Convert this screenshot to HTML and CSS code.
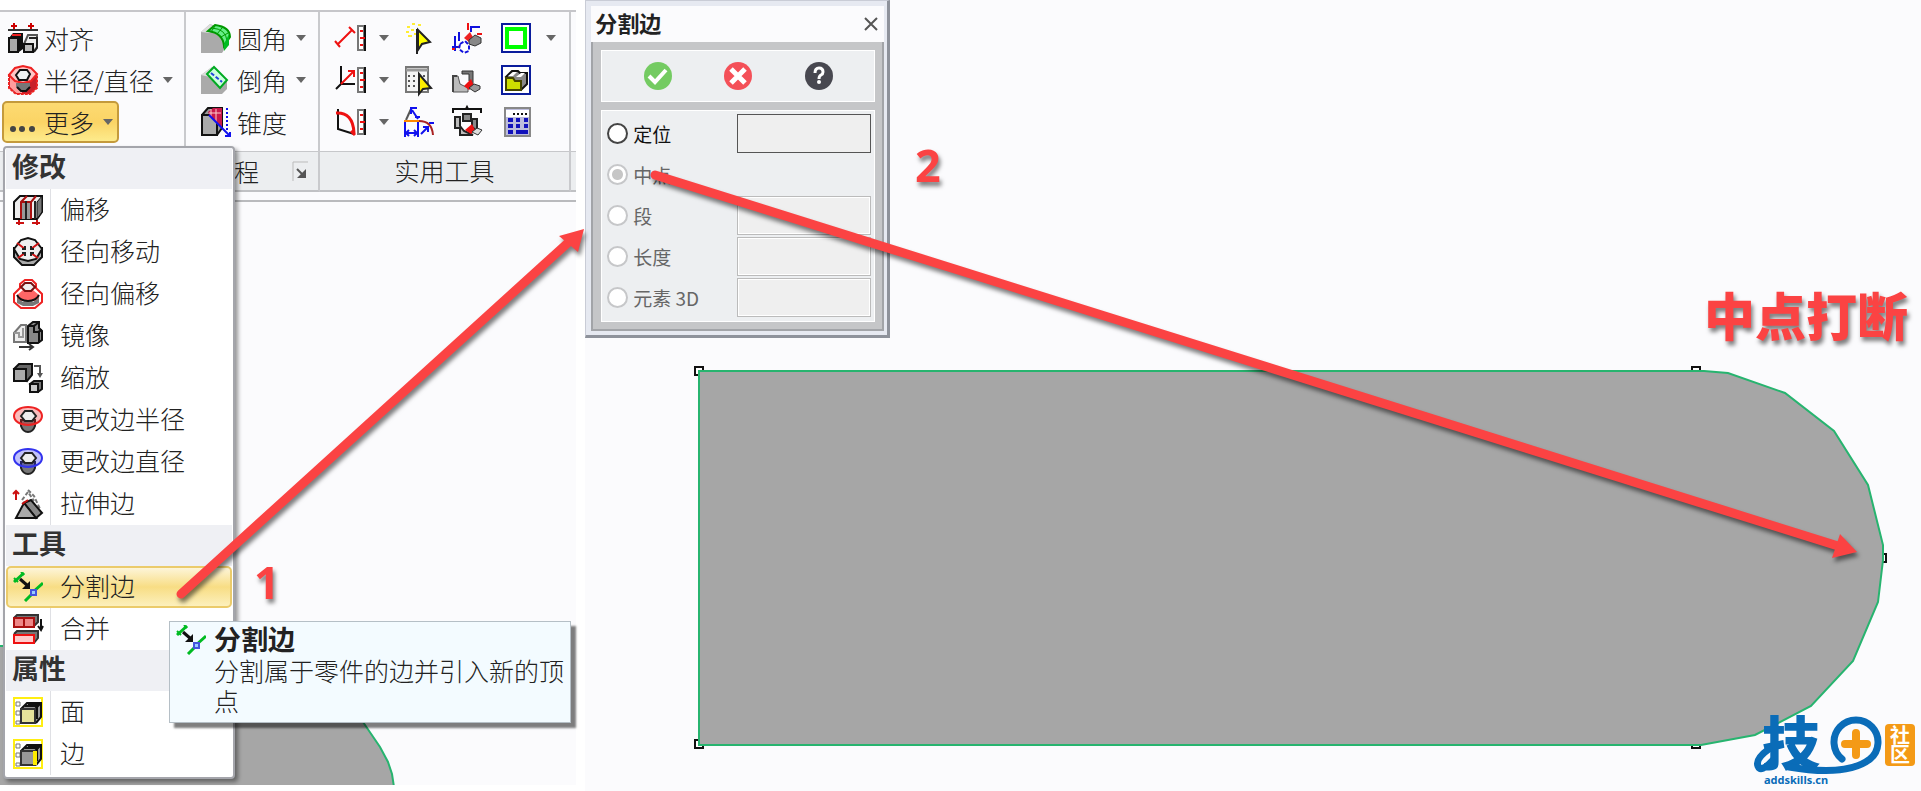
FILE: index.html
```
<!DOCTYPE html>
<html lang="zh-CN">
  <head>
    <meta charset="UTF-8" />
    <meta name="viewport" content="width=device-width, initial-scale=1.0" />
    <link rel="stylesheet" href="styles.css">
    <title>分割边</title>
  </head>
  <body>
    <!-- shared icons -->
    <svg class="sprite" aria-hidden="true">
      <symbol id="i-split" viewBox="0 0 30 30">
        <path d="M1 10 11 1M20 20 30 11M12 29 19 22" stroke="#0b2" stroke-width="3" fill="none" />
        <path d="M1 6l4 4M8 0l3 3" stroke="#0b2" stroke-width="2" />
        <path d="M7 7l8 7" stroke="#111" stroke-width="3" />
        <path d="M17 9v8H9z" fill="#111" />
        <path d="M18 18h5v5h-5z" fill="#9cf" stroke="#45d" stroke-width="2" />
      </symbol>
      <symbol id="i-ruler" viewBox="0 0 9 26">
        <path d="M1 1h6v24H1z" fill="#fff" stroke="#777" stroke-width="2" />
        <path d="M8 0v26" stroke="#111" stroke-width="2" />
        <path d="M3 6h3M3 13h5M3 20h3" stroke="#e11" stroke-width="2" />
      </symbol>
      <symbol id="i-flange" viewBox="0 0 30 30">
        <path d="M8 15v6q2 6 7 6t7-6v-6z" fill="#777" stroke="#222" stroke-width="2" />
        <path d="M1 11C1 6 7 2 15 2s14 4 14 9-6 9-14 9S1 16 1 11z" fill="currentColor" fill-opacity=".3" stroke="currentColor" stroke-width="2" />
        <path d="M8 11l4-5h7l4 5-4 5h-7z" fill="#eee" stroke="#222" stroke-width="2" />
      </symbol>
      <symbol id="i-cube" viewBox="0 0 30 30">
        <path d="M8 12l6-6h14v14l-6 6z" fill="#999" />
        <path d="M8 12l6-6h14v14l-5 6M22 12l6-6" fill="none" stroke="#111" stroke-width="2" />
        <path d="M12 9h12v13M15 7h11" fill="none" stroke="#111" stroke-width="2" />
        <path d="M8 12h14v14H8z" fill="currentColor" stroke="#333" stroke-width="2" />
      </symbol>
    </svg>

    <main class="workspace">
      <section class="modeling">
        <svg class="part-left" aria-hidden="true">
          <path d="M-2 646H300L363 722 380 747 388 762 392 774 394 787H-2z" />
        </svg>

        <div class="ribbon">
          <div class="group edit">
            <div class="commands">
              <button class="command">
                <svg class="icon" viewBox="0 0 30 30">
                  <path d="M6 0v6M3 3h6M23 0v6M20 3h6" stroke="#c00" stroke-width="2" />
                  <path d="M0 7h30" stroke="#333" stroke-width="2" />
                  <path d="M5 10h10v16l-4 3V15H1z" fill="#111" />
                  <path d="M4 12h9" stroke="#e22" stroke-width="2" />
                  <path d="M1 15h9v14H1z" fill="#aaa" stroke="#111" stroke-width="2" />
                  <path d="M16 21l4-9h9v12l-4 5" fill="#eee" stroke="#555" stroke-width="2" />
                  <path d="M21 15h8v10l-3 4" fill="none" stroke="#222" stroke-width="2" />
                  <path d="M16 21h9v8h-9z" fill="#bbb" stroke="#111" stroke-width="2" />
                </svg>
                对齐
              </button>
              <button class="command">
                <svg class="icon" viewBox="0 0 30 30">
                  <path d="M1 9v14l7 6h14l7-6V9z" fill="#c8202a" />
                  <path d="M2 10v12l6 6h6V14z" fill="#ff9d9d" />
                  <path d="M1 9v14l7 6h14l7-6V9" fill="none" stroke="#e22" stroke-width="2" stroke-dasharray="3 1" />
                  <path d="M1 10l6-7 8-2 8 2 6 6-6 7-8 2-8-2z" fill="#ffc5c5" stroke="#e22" stroke-width="2" />
                  <path d="M8 10l4-5h7l3 4-3 6h-8z" fill="#f2f2f2" stroke="#111" stroke-width="2" />
                  <path d="M8 18h14v4l-4 4h-6l-4-4z" fill="#777" />
                  <path d="M9 22l4 4h5l4-4" fill="none" stroke="#111" stroke-width="2" />
                </svg>
                半径/直径
                <i class="caret"></i>
              </button>
              <button class="command more">
                <svg class="icon" viewBox="0 0 30 30">
                  <g fill="#444"><circle cx="5" cy="22" r="3" /><circle cx="14" cy="22" r="3" /><circle cx="24" cy="22" r="3" /></g>
                </svg>
                更多
                <i class="caret"></i>
              </button>
            </div>
            <div class="caption"></div>
          </div>

          <div class="group engineering">
            <div class="commands">
              <button class="command">
                <svg class="icon" viewBox="0 0 30 30">
                  <path d="M0 9l9-8 12 5 4 18-4 6H0z" fill="#aaa" />
                  <path d="M0 9l9-8 5 4-5 5z" fill="#ddd" />
                  <path d="M7 8l7-6q15 2 15 12l-6 9Q22 10 7 8z" fill="#6e8" stroke="#090" stroke-width="2" />
                  <path d="M11 5q14 1 15 13M14 3l-4 6M21 5l-5 6M27 10l-7 4" fill="none" stroke="#090" />
                  <path d="M28 11v11l-5 6v-7z" fill="#0b2" />
                </svg>
                圆角
                <i class="caret"></i>
              </button>
              <button class="command">
                <svg class="icon" viewBox="0 0 30 30">
                  <path d="M0 10l11-8 15 14v8l-5 5H0z" fill="#aaa" />
                  <path d="M0 10l11-8 5 3-7 7z" fill="#ddd" />
                  <path d="M6 9l7-7 13 13-7 8z" fill="#cfd" stroke="#0a2" stroke-width="2" />
                  <path d="M10 8l11 9" stroke="#24d" stroke-width="2" stroke-dasharray="4 2" />
                </svg>
                倒角
                <i class="caret"></i>
              </button>
              <button class="command">
                <svg class="icon" viewBox="0 0 30 30">
                  <path d="M1 8l6-7h14v20l-5 7" fill="#999" stroke="#111" stroke-width="2" />
                  <path d="M1 8h15v20H1z" fill="#aaa" stroke="#111" stroke-width="2" />
                  <path d="M7 5l5-4h9v20L9 9z" fill="#c9184a" />
                  <path d="M10 2v9M15 2v13M8 6h12" stroke="#fcc" />
                  <path d="M8 8l21 21M29 25v4h-5" stroke="#11e" stroke-width="2" fill="none" />
                  <path d="M26 1v22" stroke="#11e" stroke-width="2" stroke-dasharray="2 2" />
                </svg>
                锥度
              </button>
            </div>
            <div class="caption">
              程
              <button class="launcher" aria-label="更多选项">
                <svg viewBox="0 0 16 20"><path d="M1 20V1h15" fill="none" stroke="#bbb" /><path d="M5 8l8 8" stroke="#555" stroke-width="2" /><path d="M14 8v9H5z" fill="#555" /></svg>
              </button>
            </div>
          </div>

          <div class="group utilities">
            <div class="commands tools">
              <button aria-label="测量距离">
                <svg class="icon" viewBox="0 0 30 30"><path d="M3 21L17 7M0 18l5 6M14 4l6 6" stroke="#e11" stroke-width="2" /><use href="#i-ruler" x="22" y="2" width="9" height="26" /></svg>
              </button>
              <i class="caret"></i>
              <button aria-label="选择">
                <svg class="icon" viewBox="0 0 30 30"><path d="M14 6v25" stroke="#222" stroke-width="2" /><path d="M15 7l12 12-8 2-4 6z" fill="#ff0" stroke="#222" stroke-width="2" /><path d="M4 4h3M9 1h3M15 2h3M3 9h3M8 7h3M5 13h4M11 11h2" stroke="#fe3" stroke-width="2" /></svg>
              </button>
              <button aria-label="装配">
                <svg class="icon" viewBox="0 0 30 30"><path d="M3 13v15M0 24h9M7 9v9M19 9V4h9" stroke="#11d" stroke-width="2" fill="none" /><path d="M16 0v7M25 11h5M0 26h3M6 24h3" stroke="#e11" stroke-width="2" /><path d="M18 9l-6 6 5 4 5-3z" fill="#e22" /><path d="M17 17l6-5 6 3v5l-6 3-6-2z" fill="#888" stroke="#333" /><path d="M8 21l5-3 4 4v6l-5 2-5-4z" fill="#fff" stroke="#11d" stroke-width="2" stroke-dasharray="4 2" /></svg>
              </button>
              <button aria-label="边框">
                <svg class="icon" viewBox="0 0 30 30"><path d="M1 1h28v28H1z" fill="#fff" stroke="#0a1c9c" stroke-width="2" /><path d="M6 6h18v18H6z" fill="none" stroke="#0f0" stroke-width="4" /></svg>
              </button>
              <i class="caret"></i>

              <button aria-label="测量角度">
                <svg class="icon" viewBox="0 0 30 30"><path d="M6 1v18h14M6 19l-5 5" stroke="#111" stroke-width="2" fill="none" /><path d="M6 19L19 6M13 6h6v6" stroke="#e11" stroke-width="2" fill="none" /><use href="#i-ruler" x="22" y="2" width="9" height="26" /></svg>
              </button>
              <i class="caret"></i>
              <button aria-label="从列表选择">
                <svg class="icon" viewBox="0 0 30 30"><path d="M3 2h22v25H3z" fill="#f4f4f4" stroke="#777" stroke-width="2" /><path d="M3 5h22" stroke="#999" stroke-width="3" /><path d="M5 11h18M5 16h18M5 21h12" stroke="#555" stroke-width="2" stroke-dasharray="2 3" /><path d="M16 9l12 14-8 1-4 5z" fill="#fe0" stroke="#222" stroke-width="2" /></svg>
              </button>
              <button aria-label="替换">
                <svg class="icon" viewBox="0 0 30 30"><path d="M1 11h5l2 8 8 4v4H1z" fill="#bbb" stroke="#555" /><path d="M10 6h11v13l-4-3v-7h-7z" fill="#777" stroke="#333" /><path d="M1 27V11h4" fill="none" stroke="#444" stroke-width="2" /><path d="M19 14l-7 7 5 4 5-4z" fill="#e11" /><path d="M17 23l5-4 6 2v3l-5 3z" fill="#999" stroke="#333" /></svg>
              </button>
              <button aria-label="文件夹">
                <svg class="icon" viewBox="0 0 30 30"><path d="M1 1h28v28H1z" fill="#fff" stroke="#0a1c9c" stroke-width="2" /><path d="M5 12l6-6h6l2 2h7v11l-6 6z" fill="#888" stroke="#111" stroke-width="2" /><path d="M7 11l5-4h4l-4 4zM15 12l5-4h4l-4 4z" fill="#fff" /><path d="M5 13h7l2 3h6v9H5z" fill="#cd0" stroke="#440" stroke-width="2" /></svg>
              </button>
              <i></i>

              <button aria-label="测量曲线">
                <svg class="icon" viewBox="0 0 30 30"><path d="M3 2v20l16 5" stroke="#111" stroke-width="2" fill="none" /><path d="M1 6q17-1 18 20M16 24l4 4" stroke="#e11" stroke-width="3" fill="none" /><use href="#i-ruler" x="22" y="2" width="9" height="26" /></svg>
              </button>
              <i class="caret"></i>
              <button aria-label="标注">
                <svg class="icon" viewBox="0 0 30 30"><path d="M3 13L8 2" stroke="#555" stroke-width="2" /><path d="M9 3l6 9M8 7V1h6M12 10h5M2 14v16M15 14v16M3 26h11M6 23l-3 3 3 3M11 23l3 3-3 3M18 27l7-7M20 20h5v5M26 16h5" stroke="#11e" stroke-width="2" fill="none" /><path d="M1 14h15" stroke="#f80" stroke-width="2" /><path d="M16 14q13 0 14 14" stroke="#a22" stroke-width="2" fill="none" /></svg>
              </button>
              <button aria-label="重新连接">
                <svg class="icon" viewBox="0 0 30 30"><path d="M1 6V2h13l1-2 1 2h13v4" fill="none" stroke="#111" stroke-width="2" /><path d="M3 10h5v9l4 5 9 4H8v-7H3z" fill="#bbb" stroke="#222" stroke-width="2" /><path d="M11 7h8v5h6v12l-5-4v-6h-9z" fill="#888" stroke="#222" stroke-width="2" /><path d="M20 17l-7 6 6 4 4-4z" fill="#e11" /><path d="M20 25l5-4 5 2-4 5z" fill="#ddd" stroke="#333" /></svg>
              </button>
              <button aria-label="计算器">
                <svg class="icon" viewBox="0 0 30 30"><path d="M4 1h25v28H4z" fill="#bcbcdc" stroke="#888" stroke-width="2" /><path d="M5 3h23v7H5z" fill="#fff" /><path d="M12 7h14" stroke="#111" stroke-width="2" stroke-dasharray="2 2" /><path d="M7 13h5M15 13h4M23 13h4M7 19h5M15 19h4M23 19h4M7 25h5M15 25h12" stroke="#11b" stroke-width="4" /></svg>
              </button>
              <i></i>
            </div>
            <div class="caption">实用工具</div>
          </div>
          <div class="group rest"><div class="commands"></div><div class="caption"></div></div>
        </div>

        <div class="menu" role="menu">
          <h2>修改</h2>
          <button role="menuitem">
            <svg class="icon" viewBox="0 0 30 30"><path d="M1 7l6-6h22v16l-5 7H1z" fill="#eee" stroke="#111" stroke-width="2" /><path d="M24 7l5-6v16l-5 7z" fill="#777" stroke="#111" /><path d="M8 8h11v16H8z" fill="#999" /><path d="M8 24V7l6-6M18 24V7l5-6M8 7h11" fill="none" stroke="#a11" stroke-width="2" /><path d="M13 6v18M22 6v18" stroke="#222" stroke-width="2" /><path d="M3 28h8M6 25v5M19 28h8M24 25v5" stroke="#c11" stroke-width="2" /></svg>
            <span>偏移</span>
          </button>
          <button role="menuitem">
            <svg class="icon" viewBox="0 0 30 30"><path d="M1 11v9l8 8h12l8-8v-9z" fill="#aaa" stroke="#111" stroke-width="2" /><path d="M1 12L8 3l7-2 7 2 7 9-6 10-8 2-8-2z" fill="#eee" stroke="#111" stroke-width="2" /><path d="M4 6l8 6M26 6l-8 6M5 21l7-5M25 21l-7-5" stroke="#c11" stroke-width="2" /><path d="M9 12h3V9M21 12h-3V9M9 16h3v3M21 16h-3v3" fill="none" stroke="#222" stroke-width="2" /></svg>
            <span>径向移动</span>
          </button>
          <button role="menuitem">
            <svg class="icon" viewBox="0 0 30 30"><path d="M1 15l6-6V5l5-4h7l4 4v4l6 6v8l-7 6H8l-7-6z" fill="#fff" stroke="#e22" stroke-width="2" /><path d="M4 16l6-5h10l6 5v6H4z" fill="#f66" /><path d="M4 19l6 4h10l6-4v5l-6 3H10l-6-3z" fill="#777" /><path d="M4 16q3 6 11 6t11-6" fill="none" stroke="#111" stroke-width="2" /><path d="M8 8l4-4h6l4 4-4 4h-6z" fill="#eee" stroke="#711" stroke-width="2" /></svg>
            <span>径向偏移</span>
          </button>
          <button role="menuitem">
            <svg class="icon" viewBox="0 0 30 30"><path d="M1 12l7-8h5v17H1z" fill="#eee" stroke="#777" stroke-width="2" /><path d="M1 12h5v4h4V7" fill="none" stroke="#999" stroke-width="2" /><path d="M15 5l5-4h6v6l3 3v9l-4 3H15z" fill="#888" stroke="#111" stroke-width="2" /><path d="M15 5h6v6h5v11M21 5l5-4M25 11l4-2" fill="none" stroke="#111" stroke-width="2" /><path d="M6 26h14M16 23l4 3-4 3" stroke="#333" stroke-width="2" fill="none" /></svg>
            <span>镜像</span>
          </button>
          <button role="menuitem">
            <svg class="icon" viewBox="0 0 30 30"><path d="M1 6l5-5h13v11l-5 6z" fill="#666" stroke="#111" stroke-width="2" /><path d="M1 6h12v12H1z" fill="#aaa" stroke="#111" stroke-width="2" /><path d="M17 21l4-3h8v8l-4 3z" fill="#777" stroke="#111" stroke-width="2" /><path d="M17 21h8v8h-8z" fill="#ccc" stroke="#111" stroke-width="2" /><path d="M21 3h6v8" fill="none" stroke="#555" stroke-width="2" /><path d="M24 10h6l-3 5z" fill="#555" /></svg>
            <span>缩放</span>
          </button>
          <button role="menuitem">
            <svg class="icon red" viewBox="0 0 30 30"><use href="#i-flange" /></svg>
            <span>更改边半径</span>
          </button>
          <button role="menuitem">
            <svg class="icon blue" viewBox="0 0 30 30"><use href="#i-flange" /></svg>
            <span>更改边直径</span>
          </button>
          <button role="menuitem">
            <svg class="icon" viewBox="0 0 30 30"><path d="M9 11l6-8 6 9M15 1l6 6 6 13" fill="none" stroke="#777" stroke-width="2" stroke-dasharray="4 2" /><path d="M11 14l7-3 11 13-6 5z" fill="#888" stroke="#111" stroke-width="2" /><path d="M3 29l8-15 12 15z" fill="#aaa" stroke="#111" stroke-width="2" /><path d="M3 11V3M0 5l3-3 3 3" stroke="#c11" stroke-width="2" fill="none" /><path d="M9 15l6-4" stroke="#c11" stroke-width="2" /></svg>
            <span>拉伸边</span>
          </button>
          <h2>工具</h2>
          <button role="menuitem" class="selected">
            <svg class="icon"><use href="#i-split" /></svg>
            <span>分割边</span>
          </button>
          <button role="menuitem">
            <svg class="icon" viewBox="0 0 30 30"><path d="M1 4l3-3h21v7l-4 4" fill="#777" stroke="#333" stroke-width="2" /><path d="M1 4h20v9H1z" fill="#e88" stroke="#a11" stroke-width="2" /><path d="M11 4v9" stroke="#a11" stroke-width="2" /><path d="M1 20l3-3h21v7l-4 5" fill="#777" stroke="#333" stroke-width="2" /><path d="M1 21h20v8H1z" fill="#fcc" stroke="#e11" stroke-width="2" /><path d="M28 5v10M25 12l3 4 2-4" fill="none" stroke="#111" stroke-width="2" /></svg>
            <span>合并</span>
          </button>
          <h2>属性</h2>
          <button role="menuitem">
            <svg class="icon face" viewBox="0 0 30 30"><path d="M1 1h28v28H1z" fill="#fff" stroke="#fe1" stroke-width="2" /><path d="M3 5h4v4H3zM3 14h4v4H3zM3 24h4v3H3z" fill="#fff" stroke="#777" /><use href="#i-cube" /></svg>
            <span>面</span>
          </button>
          <button role="menuitem">
            <svg class="icon edge" viewBox="0 0 30 30"><path d="M1 1h28v28H1z" fill="#fff" stroke="#fe1" stroke-width="2" /><path d="M3 5h4v4H3zM3 14h4v4H3zM3 24h4v3H3z" fill="#fff" stroke="#777" /><use href="#i-cube" /><path d="M22 12v14" stroke="#fe0" stroke-width="4" /></svg>
            <span>边</span>
          </button>
        </div>

        <div class="tooltip" role="tooltip">
          <svg class="icon"><use href="#i-split" /></svg>
          <div>
            <strong>分割边</strong>
            <p>分割属于零件的边并引入新的顶点</p>
          </div>
        </div>
      </section>

      <section class="viewport">
        <form class="dialog">
          <header>
            <h1>分割边</h1>
            <button type="button" aria-label="关闭">
              <svg viewBox="0 0 14 14"><path d="M1 1l12 12M13 1L1 13" stroke="#555" stroke-width="2" /></svg>
            </button>
          </header>
          <div class="frame">
            <div class="actions">
              <button type="button" aria-label="确定">
                <svg viewBox="0 0 30 30"><circle cx="15" cy="15" r="14" fill="#74cb62" /><path d="M6 15l6 6L23 9" stroke="#fff" stroke-width="4" fill="none" /></svg>
              </button>
              <button type="button" aria-label="取消">
                <svg viewBox="0 0 30 30"><circle cx="15" cy="15" r="14" fill="#f45058" /><path d="M8 8l14 14M22 8L8 22" stroke="#fff" stroke-width="5" /></svg>
              </button>
              <button type="button" aria-label="帮助">
                <svg viewBox="0 0 30 30"><circle cx="15" cy="15" r="14" fill="#484850" /><path d="M11 12q0-5 4-5t4 4q0 2-2 3-2 1-2 4" stroke="#fff" stroke-width="3" fill="none" /><circle cx="15" cy="21" r="2" fill="#fff" /></svg>
              </button>
            </div>
            <div class="options">
              <div class="row">
                <input type="radio" name="mode" id="position" />
                <label for="position">定位</label>
                <input type="text" aria-label="定位值" />
              </div>
              <div class="row">
                <input type="radio" name="mode" id="middle" checked disabled />
                <label for="middle">中点</label>
              </div>
              <div class="row">
                <input type="radio" name="mode" id="segment" disabled />
                <label for="segment">段</label>
                <input type="text" aria-label="段值" disabled />
              </div>
              <div class="row">
                <input type="radio" name="mode" id="length" disabled />
                <label for="length">长度</label>
                <input type="text" aria-label="长度值" disabled />
              </div>
              <div class="row">
                <input type="radio" name="mode" id="element" disabled />
                <label for="element">元素 3D</label>
                <input type="text" aria-label="元素 3D 值" disabled />
              </div>
            </div>
          </div>
        </form>
      </section>

      <!-- part, vertices and callouts on the free canvas -->
      <svg class="canvas">
        <g class="vertex">
          <path d="M695 367h8v8h-8zM1692 367h8v8h-8zM1878 554h8v8h-8zM1692 740h8v8h-8zM695 740h8v8h-8z" />
        </g>
        <path class="part" d="M699 371H1704L1728 373 1785 393 1834 431 1868 485 1883 545V560L1878 602 1853 661 1811 706 1755 735 1701 745H699z" />
        <g class="callout">
          <path class="shaft" d="M181 594L571 240M655 175L1838 546" />
          <path class="head" d="M584 229L578 252 559 236zM1857 552L1832 558 1840 534z" />
          <text x="254" y="599">1</text>
          <text x="915" y="182">2</text>
          <text class="note" x="1704" y="336">中点打断</text>
        </g>
      </svg>

      <svg class="logo" viewBox="0 0 166 76" role="img" aria-label="技田社区">
        <text class="logo-char" x="11" y="50">技</text>
        <path d="M18 34Q4 44 7 51T21 46M91 44A22 22 0 1 1 119 44Q96 62 38 52" fill="none" stroke="#0a6cb8" stroke-width="7" stroke-linecap="round" />
        <path d="M105 18v22M94 29h22" stroke="#f49a16" stroke-width="8" stroke-linecap="round" />
        <rect x="134" y="9" width="30" height="42" rx="4" fill="#f49a16" />
        <text class="logo-badge" x="139" y="28">社</text>
        <text class="logo-badge" x="139" y="47">区</text>
        <text class="logo-site" x="13" y="69">addskills.cn</text>
      </svg>
    </main>
  </body>
</html>
```
FILE: styles.css
```
* {
  box-sizing: border-box;
}

body {
  margin: 0;
  font-family: "Noto Sans CJK SC", sans-serif;
  font-size: 25px;
  font-weight: 300;
  color: #222;
  background-color: #fff;
}

button {
  border: none;
  padding: 0;
  background: none;
  font: inherit;
  color: inherit;
}

.sprite {
  position: absolute;
  width: 0;
  height: 0;
}

.icon {
  display: block;
  flex: none;
  width: 30px;
  height: 30px;
  overflow: visible;
}

.workspace {
  position: relative;
  display: flex;
  gap: 9px;
  min-height: 100vh;
  overflow: hidden;
}

.modeling {
  position: relative;
  flex: 0 0 30%;
  margin-bottom: 6px;
  padding-top: 10px;
  background-color: #fbfbfd;
  box-shadow: inset 0 10px #fff;
}

.viewport {
  flex: 1;
  background-color: #fbfbfd;
}

.part-left {
  position: absolute;
  top: 0;
  left: 0;
  width: 100%;
  height: 100%;
}

.part-left path,
.part {
  fill: #a6a6a6;
  stroke: #27b46f;
  stroke-width: 2;
}

/* ribbon */
.ribbon {
  position: relative;
  display: flex;
  padding-bottom: 8px;
  border-top: 2px solid #c6c6ca;
  border-bottom: 2px solid #b9babd;
}

.group {
  display: flex;
  flex-direction: column;
  border-right: 2px solid #c9cacd;
  border-bottom: 2px solid #c0c1c4;
}

.edit {
  width: 186px;
}

.engineering {
  width: 134px;
}

.utilities {
  width: 251px;
}

.rest {
  flex: 1;
  border-right: none;
}

.commands {
  height: 140px;
  padding: 5px 0 0 15px;
  border-bottom: 1px solid #c6c7ca;
}

.edit .commands {
  padding-left: 2px;
}

.rest .commands {
  padding: 0;
}

.command {
  display: flex;
  align-items: center;
  gap: 6px;
  height: 42px;
  padding: 0 6px;
  line-height: 38px;
  white-space: nowrap;
}

.engineering .command {
  padding: 0;
}

.caret {
  width: 10px;
  height: 6px;
  margin-left: 3px;
  background-color: #666;
  clip-path: polygon(0 0, 100% 0, 50% 100%);
}

.more {
  border: 2px solid #c49a3c;
  border-radius: 5px;
  padding: 0 4px;
  background: linear-gradient(#fdda72, #fbd465 50%, #fdeb8c);
}

.tools {
  display: grid;
  grid-template-columns: 44px 24px 49px 49px 45px 20px;
  grid-auto-rows: 42px;
  align-items: center;
}

.tools .caret {
  margin-left: 0;
}

.caption {
  height: 38px;
  line-height: 36px;
  text-align: center;
  background-color: #eceef0;
}

.engineering .caption {
  display: flex;
  align-items: center;
  justify-content: space-between;
  padding: 0 10px 0 48px;
}

.launcher svg {
  display: block;
  width: 16px;
  height: 20px;
}

/* drop-down menu */
.menu {
  position: absolute;
  top: 146px;
  left: 3px;
  width: 232px;
  padding: 0 1px 2px;
  border: 2px solid #a4a5ab;
  border-radius: 4px;
  background-color: #fff;
  box-shadow: 3px 3px 4px rgba(0, 0, 0, 0.4);
}

.menu h2 {
  height: 41px;
  margin: 0;
  padding-left: 6px;
  font-size: 27px;
  font-weight: 700;
  line-height: 36px;
  color: #333;
  background-color: #eff0f4;
}

.menu button {
  display: flex;
  align-items: center;
  gap: 7px;
  width: 100%;
  height: 42px;
  padding-left: 7px;
}

.menu span {
  height: 42px;
  padding-left: 9px;
  border-left: 1px solid #dfe0e4;
  line-height: 38px;
}

.menu .selected {
  border: 2px solid #ebcb6b;
  border-radius: 5px;
  padding-left: 5px;
  background: linear-gradient(#fdf5d8, #f8dd84 50%, #fcf0bd);
}

.selected span {
  border-color: transparent;
}

.red {
  color: #e22;
}

.blue {
  color: #33e;
}

.face {
  color: #e5e29b;
}

.edge {
  color: #999;
}

.tooltip {
  position: absolute;
  top: 621px;
  left: 169px;
  display: flex;
  gap: 8px;
  width: 402px;
  padding: 0 4px 7px 6px;
  border: 1px solid #b5bfc6;
  background-color: #f3fbff;
  box-shadow: 5px 5px 2px rgba(0, 0, 0, 0.5);
  line-height: 30px;
}

.tooltip .icon {
  margin-top: 3px;
}

.tooltip strong {
  display: block;
  font-size: 27px;
  font-weight: 700;
  line-height: 33px;
}

.tooltip p {
  margin: 0;
}

/* dialog */
.dialog {
  width: 305px;
  padding: 5px 3px 4px 5px;
  border: 1px solid #c9ccd6;
  border-right: 3px solid #8e929b;
  border-bottom: 3px solid #8e929b;
  background-color: #e6e9f1;
}

.dialog header {
  display: flex;
  align-items: center;
  justify-content: space-between;
  height: 36px;
  padding: 0 6px 0 4px;
  background-color: #fbfbfd;
}

.dialog h1 {
  margin: 0;
  font-size: 22px;
  font-weight: 700;
  line-height: 32px;
  height: 36px;
}

.dialog svg {
  display: block;
  width: 30px;
  height: 30px;
}

.dialog header svg {
  width: 14px;
  height: 14px;
}

.frame {
  display: flex;
  flex-direction: column;
  gap: 8px;
  padding: 8px 7px 7px 8px;
  border: 2px solid #a2a4a8;
  border-top: none;
  background-color: #c5c6c8;
}

.actions,
.options {
  border: 1px solid #fff;
  background-color: #edeff1;
}

.actions {
  display: flex;
  align-items: center;
  justify-content: space-evenly;
  height: 52px;
}

.actions button {
  padding: 0 10px;
}

.options {
  padding: 2px 3px 3px 5px;
  font-size: 19px;
  font-weight: 400;
}

.row {
  display: flex;
  align-items: center;
  height: 41px;
}

.row label {
  flex: 1;
  padding-left: 5px;
  line-height: 38px;
  color: #111;
}

.row input {
  appearance: none;
  margin: 0;
}

.row input[type="radio"] {
  width: 21px;
  height: 21px;
  border: 2px solid #444;
  border-radius: 50%;
  background-color: #fff;
}

.row input[type="radio"]:disabled {
  border-color: #c6c7c9;
}

.row input[type="radio"]:checked {
  border-color: #c6c7c9;
  background: radial-gradient(circle, #c6c6c6 5px, #fff 6px);
}

.row input[type="text"] {
  width: 134px;
  height: 39px;
  border: 1px solid #555;
  background-color: #efefef;
}

.row input[type="text"]:disabled {
  border-color: #bbb;
  box-shadow: inset 0 0 0 1px #fff;
}

.row input:disabled + label {
  color: #666;
}

/* canvas and callouts */
.canvas {
  position: absolute;
  top: 0;
  left: 0;
  width: 100%;
  height: 100%;
  pointer-events: none;
}

.vertex {
  fill: #fff;
  stroke: #111;
  stroke-width: 2;
}

.callout {
  fill: #fb4343;
  filter: drop-shadow(2px 4px 2px rgba(0, 0, 0, 0.5));
  font-family: "Noto Sans", sans-serif;
  font-size: 45px;
  font-weight: 700;
}

.shaft {
  stroke: #fb4343;
  stroke-width: 9;
  stroke-linecap: round;
}

.note {
  font-family: "Noto Sans CJK SC", sans-serif;
  font-size: 51px;
  font-weight: 900;
}

.logo {
  position: absolute;
  right: 4px;
  bottom: 0;
  width: 166px;
  height: 76px;
}

.logo-char {
  font-size: 58px;
  font-weight: 900;
  fill: #0a6cb8;
}

.logo-badge {
  font-size: 20px;
  font-weight: 700;
  fill: #fff;
}

.logo-site {
  font-family: "Noto Sans", sans-serif;
  font-size: 11px;
  font-weight: 700;
  fill: #0a6cb8;
}
```
